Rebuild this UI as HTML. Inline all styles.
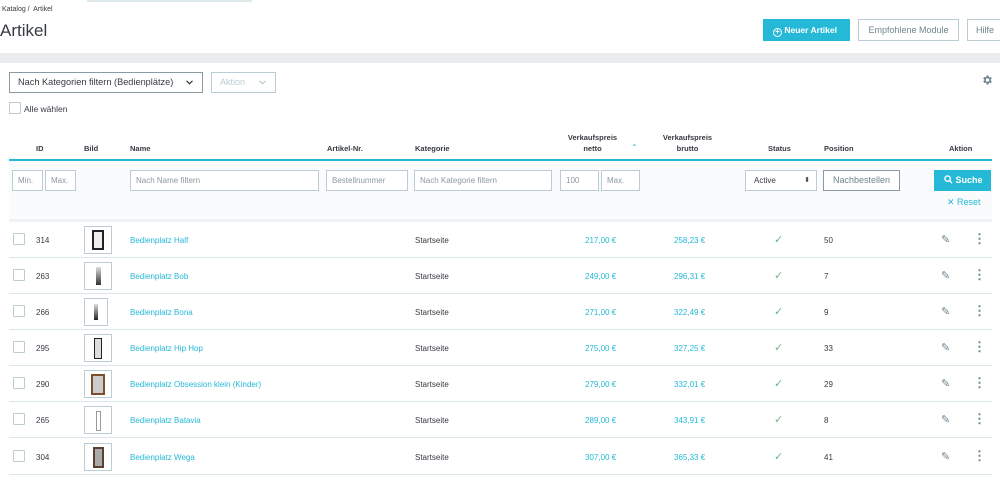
<!DOCTYPE html><html><head><style>
*{margin:0;padding:0;box-sizing:border-box}
body{width:1000px;height:480px;overflow:hidden;background:#fff;font-family:"Liberation Sans",sans-serif;color:#363a41;position:relative;font-size:8px}
.a{position:absolute;white-space:nowrap}
.inp{position:absolute;height:21px;border:1px solid #bbcdd2;background:#fff;color:#8a9aa0;font-size:8px;line-height:19px;padding-left:5px}
.th{position:absolute;font-weight:bold;font-size:7.5px;color:#363a41;text-align:center}
.row{position:absolute;left:9px;width:983px;height:36px;border-bottom:1px solid #dbe6e9}
.row .a{top:14px}
.cb{position:absolute;left:4px;top:11px;width:12px;height:12px;border:1px solid #bbcdd2;border-radius:1px}
.img{position:absolute;left:75px;top:4px;width:28px;height:28px;border:1px solid #bbcdd2;background:#fff}
.lnk{color:#25b9d7}
</style></head><body>
<div class="a" style="left:87px;top:0;width:165px;height:2px;background:#dfe9eb"></div>
<div class="a" style="left:2px;top:6px;font-size:7px;color:#363a41">Katalog /&nbsp; Artikel</div>
<div class="a" style="left:0;top:21px;font-size:17px;color:#363a41">Artikel</div>
<div class="a" style="left:763px;top:19px;width:87px;height:22px;background:#25b9d7;color:#fff;font-weight:bold;font-size:8.5px;line-height:22px;padding-left:10px"><span style="display:inline-block;width:9px;height:9px;border:1.3px solid #fff;border-radius:50%;font-size:8px;line-height:6px;text-align:center;vertical-align:-1px">+</span> Neuer Artikel</div>
<div class="a" style="left:858px;top:19px;width:101px;height:22px;border:1px solid #bbcdd2;color:#6c868e;font-size:9px;line-height:20px;text-align:center">Empfohlene Module</div>
<div class="a" style="left:967px;top:19px;width:40px;height:22px;border:1px solid #bbcdd2;color:#6c868e;font-size:9px;line-height:20px;padding-left:8px">Hilfe</div>
<div class="a" style="left:0;top:53px;width:1000px;height:10px;background:#eaebec"></div>
<div class="a" style="left:9px;top:72px;width:194px;height:21px;border:1px solid #8a9aa0;font-size:9.2px;line-height:19px;padding-left:8px;color:#363a41">Nach Kategorien filtern (Bedienplätze)<svg style="position:absolute;right:9px;top:7px" width="7" height="5" viewBox="0 0 7 5"><path d="M.5 .8 3.5 3.8 6.5 .8" fill="none" stroke="#363a41" stroke-width="1.2"/></svg></div>
<div class="a" style="left:211px;top:72px;width:65px;height:21px;border:1px solid #bbcdd2;font-size:9px;line-height:19px;padding-left:8px;color:#bbcdd2">Aktion<svg style="position:absolute;right:9px;top:7px" width="7" height="5" viewBox="0 0 7 5"><path d="M.5 .8 3.5 3.8 6.5 .8" fill="none" stroke="#bbcdd2" stroke-width="1.2"/></svg></div>
<svg class="a" style="left:981px;top:74px" width="12" height="12" viewBox="0 0 24 24"><path fill="#6c868e" d="M19.4 13a7.5 7.5 0 000-2l2.1-1.6-2-3.5-2.5 1a7.6 7.6 0 00-1.7-1L15 3h-4l-.4 2.7a7.6 7.6 0 00-1.7 1l-2.5-1-2 3.5L6.6 11a7.5 7.5 0 000 2l-2.1 1.6 2 3.5 2.5-1a7.6 7.6 0 001.7 1L11 21h4l.4-2.7a7.6 7.6 0 001.7-1l2.5 1 2-3.5zM13 15.5a3.5 3.5 0 110-7 3.5 3.5 0 010 7z"/></svg>
<div class="a" style="left:9px;top:102px;width:12px;height:12px;border:1px solid #bbcdd2"></div>
<div class="a" style="left:24px;top:104px;font-size:8.5px">Alle wählen</div>
<div class="th" style="left:36px;top:144px">ID</div>
<div class="th" style="left:84px;top:144px">Bild</div>
<div class="th" style="left:130px;top:144px">Name</div>
<div class="th" style="left:327px;top:144px">Artikel-Nr.</div>
<div class="th" style="left:415px;top:144px">Kategorie</div>
<div class="th" style="left:555px;top:132px;width:75px;line-height:11px">Verkaufspreis<br>netto</div>
<div class="a" style="left:631px;top:143px;color:#25b9d7;font-size:8px">⌃</div>
<div class="th" style="left:650px;top:132px;width:75px;line-height:11px">Verkaufspreis<br>brutto</div>
<div class="th" style="left:768px;top:144px">Status</div>
<div class="th" style="left:824px;top:144px">Position</div>
<div class="th" style="left:949px;top:144px">Aktion</div>
<div class="a" style="left:9px;top:159px;width:983px;height:2px;background:#25b9d7"></div>
<div class="a" style="left:9px;top:161px;width:983px;height:58px;background:#fafbfc"></div>
<div class="inp" style="left:12px;top:170px;width:31px">Min.</div>
<div class="inp" style="left:45px;top:170px;width:31px">Max.</div>
<div class="inp" style="left:130px;top:170px;width:189px">Nach Name filtern</div>
<div class="inp" style="left:326px;top:170px;width:82px">Bestellnummer</div>
<div class="inp" style="left:414px;top:170px;width:138px">Nach Kategorie filtern</div>
<div class="inp" style="left:560px;top:170px;width:39px">100</div>
<div class="inp" style="left:601px;top:170px;width:39px">Max.</div>
<div class="inp" style="left:745px;top:170px;width:72px;color:#363a41;padding-left:8px">Active<span style="position:absolute;right:6px;font-size:7px">⬍</span></div>
<div class="inp" style="left:823px;top:170px;width:77px;border-color:#8a9aa0;color:#6c868e;text-align:center;padding:0;font-size:9px">Nachbestellen</div>
<div class="a" style="left:934px;top:170px;width:57px;height:21px;background:#25b9d7;color:#fff;font-weight:bold;font-size:9px;line-height:21px;padding-left:10px"><svg width="9" height="9" viewBox="0 0 10 10" style="vertical-align:-1px"><circle cx="4" cy="4" r="3" fill="none" stroke="#fff" stroke-width="1.5"/><path d="M6.2 6.2 9 9" stroke="#fff" stroke-width="1.6"/></svg> Suche</div>
<div class="a" style="left:947px;top:197px;color:#25b9d7;font-size:9px">✕ Reset</div>
<div class="a" style="left:9px;top:219px;width:983px;height:3px;background:#f0f2f3"></div>

<div class="row" style="top:222px"><div class="cb"></div><div class="a" style="left:27px">314</div><div class="img"><div style="position:absolute;left:7px;top:3px;width:12px;height:20px;border:2px solid #222;background:#eee"></div></div><div class="a lnk" style="left:121px">Bedienplatz Half</div><div class="a" style="left:406px">Startseite</div><div class="a lnk" style="left:576px">217,00 €</div><div class="a lnk" style="left:665px">258,23 €</div><div class="a" style="left:765px;top:11px;color:#70b580;font-size:11px">✓</div><div class="a" style="left:815px">50</div><div class="a" style="left:932px;top:11px;color:#6c868e;font-size:11px">✎</div><div class="a" style="left:964px;top:9px;color:#6c868e;font-size:13px;font-weight:bold">⋮</div></div>
<div class="row" style="top:258px"><div class="cb"></div><div class="a" style="left:27px">263</div><div class="img"><div style="position:absolute;left:11px;top:4px;width:5px;height:18px;background:linear-gradient(#ddd,#333)"></div></div><div class="a lnk" style="left:121px">Bedienplatz Bob</div><div class="a" style="left:406px">Startseite</div><div class="a lnk" style="left:576px">249,00 €</div><div class="a lnk" style="left:665px">296,31 €</div><div class="a" style="left:765px;top:11px;color:#70b580;font-size:11px">✓</div><div class="a" style="left:815px">7</div><div class="a" style="left:932px;top:11px;color:#6c868e;font-size:11px">✎</div><div class="a" style="left:964px;top:9px;color:#6c868e;font-size:13px;font-weight:bold">⋮</div></div>
<div class="row" style="top:294px"><div class="cb"></div><div class="a" style="left:27px">266</div><div class="img" style="width:24px"><div style="position:absolute;left:9px;top:5px;width:4px;height:16px;background:linear-gradient(#ddd,#222)"></div></div><div class="a lnk" style="left:121px">Bedienplatz Bona</div><div class="a" style="left:406px">Startseite</div><div class="a lnk" style="left:576px">271,00 €</div><div class="a lnk" style="left:665px">322,49 €</div><div class="a" style="left:765px;top:11px;color:#70b580;font-size:11px">✓</div><div class="a" style="left:815px">9</div><div class="a" style="left:932px;top:11px;color:#6c868e;font-size:11px">✎</div><div class="a" style="left:964px;top:9px;color:#6c868e;font-size:13px;font-weight:bold">⋮</div></div>
<div class="row" style="top:330px"><div class="cb"></div><div class="a" style="left:27px">295</div><div class="img"><div style="position:absolute;left:9px;top:3px;width:8px;height:21px;border:1.5px solid #222;background:#ddd"></div></div><div class="a lnk" style="left:121px">Bedienplatz Hip Hop</div><div class="a" style="left:406px">Startseite</div><div class="a lnk" style="left:576px">275,00 €</div><div class="a lnk" style="left:665px">327,25 €</div><div class="a" style="left:765px;top:11px;color:#70b580;font-size:11px">✓</div><div class="a" style="left:815px">33</div><div class="a" style="left:932px;top:11px;color:#6c868e;font-size:11px">✎</div><div class="a" style="left:964px;top:9px;color:#6c868e;font-size:13px;font-weight:bold">⋮</div></div>
<div class="row" style="top:366px"><div class="cb"></div><div class="a" style="left:27px">290</div><div class="img"><div style="position:absolute;left:6px;top:3px;width:14px;height:21px;border:2px solid #7a5030;background:#ccc"></div></div><div class="a lnk" style="left:121px">Bedienplatz Obsession klein (Kinder)</div><div class="a" style="left:406px">Startseite</div><div class="a lnk" style="left:576px">279,00 €</div><div class="a lnk" style="left:665px">332,01 €</div><div class="a" style="left:765px;top:11px;color:#70b580;font-size:11px">✓</div><div class="a" style="left:815px">29</div><div class="a" style="left:932px;top:11px;color:#6c868e;font-size:11px">✎</div><div class="a" style="left:964px;top:9px;color:#6c868e;font-size:13px;font-weight:bold">⋮</div></div>
<div class="row" style="top:402px"><div class="cb"></div><div class="a" style="left:27px">265</div><div class="img"><div style="position:absolute;left:11px;top:4px;width:5px;height:20px;border:1px solid #999"></div></div><div class="a lnk" style="left:121px">Bedienplatz Batavia</div><div class="a" style="left:406px">Startseite</div><div class="a lnk" style="left:576px">289,00 €</div><div class="a lnk" style="left:665px">343,91 €</div><div class="a" style="left:765px;top:11px;color:#70b580;font-size:11px">✓</div><div class="a" style="left:815px">8</div><div class="a" style="left:932px;top:11px;color:#6c868e;font-size:11px">✎</div><div class="a" style="left:964px;top:9px;color:#6c868e;font-size:13px;font-weight:bold">⋮</div></div>
<div class="row" style="top:439px"><div class="cb"></div><div class="a" style="left:27px">304</div><div class="img"><div style="position:absolute;left:8px;top:3px;width:11px;height:21px;border:2px solid #5a4030;background:#aaa"></div></div><div class="a lnk" style="left:121px">Bedienplatz Wega</div><div class="a" style="left:406px">Startseite</div><div class="a lnk" style="left:576px">307,00 €</div><div class="a lnk" style="left:665px">365,33 €</div><div class="a" style="left:765px;top:11px;color:#70b580;font-size:11px">✓</div><div class="a" style="left:815px">41</div><div class="a" style="left:932px;top:11px;color:#6c868e;font-size:11px">✎</div><div class="a" style="left:964px;top:9px;color:#6c868e;font-size:13px;font-weight:bold">⋮</div></div>
</body></html>
